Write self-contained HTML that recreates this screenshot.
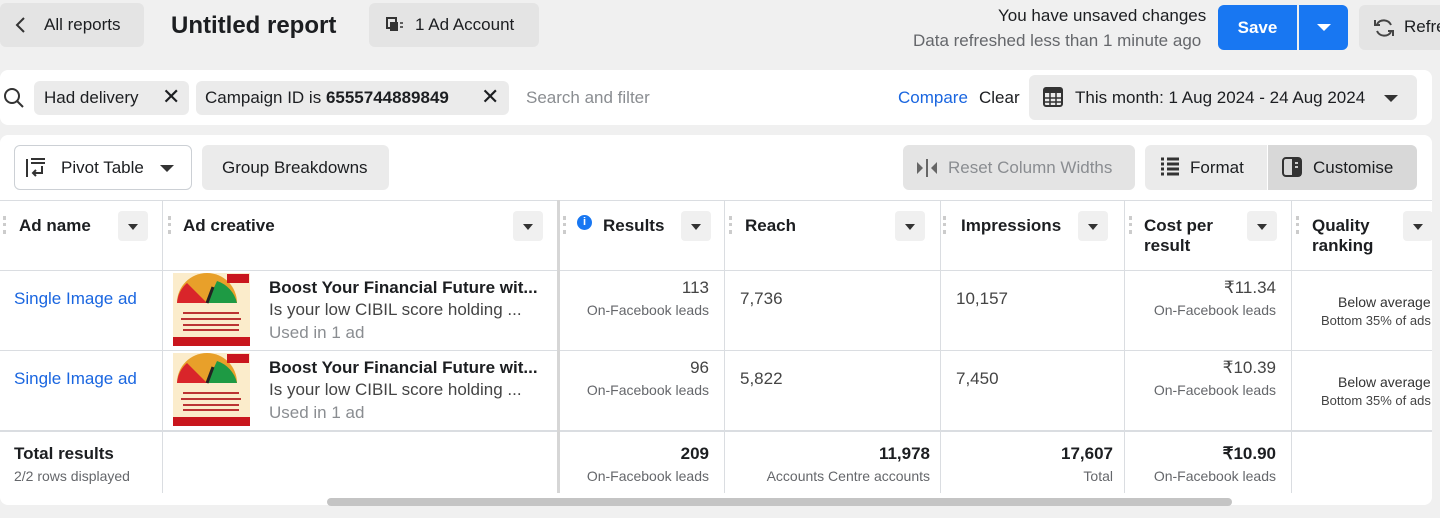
<!DOCTYPE html><html><head><style>
*{box-sizing:border-box;margin:0;padding:0}
body{width:1440px;height:518px;background:#f0f0f0;font-family:"Liberation Sans",sans-serif;color:#1c1e21;position:relative;overflow:hidden;font-size:17px}
.a{position:absolute;white-space:nowrap}
.btn{position:absolute;background:#e4e4e4;border-radius:6px}
.g{color:#65676b}
.dd{position:absolute;width:30px;height:30px;background:#f0f0f0;border-radius:4px}
.dd:after{content:"";position:absolute;left:10px;top:13px;border:5px solid transparent;border-top:6px solid #333;border-bottom:0}
.vl{position:absolute;width:1px;background:#dadde1}
.hl{position:absolute;height:1px;background:#dadde1}
.hd{font-weight:bold;font-size:17px}
.grip{position:absolute;width:3px;height:18px;border-left:3px dotted #ccc}
.r{text-align:right}
.sm{font-size:14px;color:#65676b}
.lnk{color:#1a66e0}
</style></head><body>
<div class="btn" style="left:0;top:3px;width:144px;height:44px"></div>
<svg class="a" style="left:14px;top:16px" width="14" height="18"><path d="M10 2 L3 9 L10 16" stroke="#333" stroke-width="2" fill="none"/></svg>
<div class="a" style="left:44px;top:15px">All reports</div>
<div class="a" style="left:171px;top:12px;font-size:24px;font-weight:bold">Untitled report</div>
<div class="btn" style="left:369px;top:3px;width:170px;height:44px"></div>
<svg class="a" style="left:386px;top:17px" width="18" height="16"><rect x="1" y="1" width="9" height="10" fill="none" stroke="#333" stroke-width="2"/><rect x="4" y="5" width="8" height="9" fill="#333"/><path d="M14 6h3M14 10h3" stroke="#333" stroke-width="1.5"/></svg>
<div class="a" style="left:415px;top:15px">1 Ad Account</div>
<div class="a" style="left:998px;top:6px">You have unsaved changes</div>
<div class="a g" style="left:913px;top:31px">Data refreshed less than 1 minute ago</div>
<div class="a" style="left:1218px;top:5px;width:79px;height:45px;background:#1877f2;border-radius:6px 0 0 6px;color:#fff;font-weight:bold;text-align:center;line-height:45px">Save</div>
<div class="a" style="left:1299px;top:5px;width:49px;height:45px;background:#1877f2;border-radius:0 6px 6px 0"></div>
<div class="a" style="left:1317px;top:24px;border:7px solid transparent;border-top:7px solid #fff;border-bottom:0"></div>
<div class="btn" style="left:1359px;top:5px;width:100px;height:45px"></div>
<svg class="a" style="left:1373px;top:17px" width="22" height="22"><path d="M18 8A8 8 0 0 0 4 7M4 14A8 8 0 0 0 18 15" stroke="#444" stroke-width="2" fill="none"/><path d="M2 3v5h5M20 19v-5h-5" stroke="#444" stroke-width="2" fill="none"/></svg>
<div class="a" style="left:1404px;top:17px">Refre</div>

<div class="a" style="left:0;top:70px;width:1432px;height:55px;background:#fff;border-radius:8px"></div>
<svg class="a" style="left:3px;top:87px" width="22" height="22"><circle cx="9" cy="9" r="7" stroke="#333" stroke-width="2" fill="none"/><path d="M14 14l6 6" stroke="#333" stroke-width="2"/></svg>
<div class="btn" style="left:34px;top:81px;width:155px;height:34px;background:#ebebeb"></div>
<div class="a" style="left:44px;top:88px">Had delivery</div>
<div class="a" style="left:162px;top:84px;font-size:22px">✕</div>
<div class="btn" style="left:196px;top:81px;width:313px;height:34px;background:#ebebeb"></div>
<div class="a" style="left:205px;top:88px">Campaign ID is <b>6555744889849</b></div>
<div class="a" style="left:481px;top:84px;font-size:22px">✕</div>
<div class="a" style="left:526px;top:88px;color:#8a8d91">Search and filter</div>
<div class="a lnk" style="left:898px;top:88px">Compare</div>
<div class="a" style="left:979px;top:88px">Clear</div>
<div class="btn" style="left:1029px;top:75px;width:388px;height:45px;background:#ebebeb"></div>
<svg class="a" style="left:1043px;top:87px" width="20" height="20"><rect x="1" y="1" width="18" height="18" rx="2" fill="none" stroke="#333" stroke-width="2"/><rect x="1" y="1" width="18" height="5" fill="#333"/><path d="M7 6v13M13 6v13M1 11h18M1 15h18" stroke="#333" stroke-width="1.5"/></svg>
<div class="a" style="left:1075px;top:88px">This month: 1 Aug 2024 - 24 Aug 2024</div>
<div class="a" style="left:1384px;top:95px;border:7px solid transparent;border-top:7px solid #333;border-bottom:0"></div>

<div class="a" style="left:0;top:135px;width:1432px;height:370px;background:#fff;border-radius:8px"></div>
<div class="a" style="left:14px;top:145px;width:178px;height:45px;border:1px solid #ccd0d5;border-radius:6px"></div>
<svg class="a" style="left:25px;top:157px" width="22" height="22"><path d="M2 2v18M6 2h14M6 6h14" stroke="#333" stroke-width="2"/><path d="M17 9v7h-8M11 13l-3 3 3 3" stroke="#333" stroke-width="2" fill="none"/></svg>
<div class="a" style="left:61px;top:158px">Pivot Table</div>
<div class="a" style="left:160px;top:165px;border:7px solid transparent;border-top:7px solid #333;border-bottom:0"></div>
<div class="btn" style="left:202px;top:145px;width:187px;height:45px;background:#ebebeb"></div>
<div class="a" style="left:222px;top:158px">Group Breakdowns</div>
<div class="btn" style="left:903px;top:145px;width:232px;height:45px;background:#e4e4e4"></div>
<svg class="a" style="left:915px;top:158px" width="24" height="20"><path d="M2 4l6 6-6 6zM22 4l-6 6 6 6z" fill="#666"/><path d="M12 1v18" stroke="#666" stroke-width="2"/></svg>
<div class="a" style="left:948px;top:158px;color:#8a8d91">Reset Column Widths</div>
<div class="btn" style="left:1145px;top:145px;width:122px;height:45px;background:#ebebeb;border-radius:6px 0 0 6px"></div>
<svg class="a" style="left:1160px;top:157px" width="20" height="20"><path d="M1 2h3M1 7h3M1 12h3M1 17h3M7 2h12M7 7h12M7 12h12M7 17h12" stroke="#333" stroke-width="3"/></svg>
<div class="a" style="left:1190px;top:158px">Format</div>
<div class="btn" style="left:1268px;top:145px;width:149px;height:45px;background:#d8d8d8;border-radius:0 6px 6px 0"></div>
<svg class="a" style="left:1282px;top:157px" width="20" height="20"><rect x="1" y="1" width="18" height="18" rx="3" fill="none" stroke="#333" stroke-width="2"/><rect x="10" y="1" width="9" height="18" fill="#333"/><path d="M13 6h3M13 10h3" stroke="#fff" stroke-width="1.5"/></svg>
<div class="a" style="left:1313px;top:158px">Customise</div>

<div class="hl" style="left:0;top:200px;width:1432px"></div>
<div class="hl" style="left:0;top:270px;width:1432px"></div>
<div class="hl" style="left:0;top:350px;width:1432px"></div>
<div class="hl" style="left:0;top:430px;width:1432px;height:2px"></div>
<div class="vl" style="left:162px;top:200px;height:293px"></div>
<div class="a" style="left:557px;top:200px;width:3px;height:293px;background:#d6d6d6"></div>
<div class="vl" style="left:724px;top:200px;height:293px"></div>
<div class="vl" style="left:940px;top:200px;height:293px"></div>
<div class="vl" style="left:1124px;top:200px;height:293px"></div>
<div class="vl" style="left:1291px;top:200px;height:293px"></div>

<div class="grip" style="left:3px;top:216px"></div><div class="a hd" style="left:19px;top:216px">Ad name</div><div class="dd" style="left:118px;top:211px"></div>
<div class="grip" style="left:168px;top:216px"></div><div class="a hd" style="left:183px;top:216px">Ad creative</div><div class="dd" style="left:513px;top:211px"></div>
<div class="grip" style="left:563px;top:216px"></div>
<div class="a" style="left:577px;top:215px;width:15px;height:15px;border-radius:50%;background:#1877f2;color:#fff;font-size:11px;font-weight:bold;text-align:center;line-height:15px">i</div>
<div class="a hd" style="left:603px;top:216px">Results</div><div class="dd" style="left:681px;top:211px"></div>
<div class="grip" style="left:729px;top:216px"></div><div class="a hd" style="left:745px;top:216px">Reach</div><div class="dd" style="left:895px;top:211px"></div>
<div class="grip" style="left:943px;top:216px"></div><div class="a hd" style="left:961px;top:216px">Impressions</div><div class="dd" style="left:1078px;top:211px"></div>
<div class="grip" style="left:1129px;top:216px"></div>
<div class="a hd" style="left:1144px;top:216px;line-height:20px">Cost per<br>result</div><div class="dd" style="left:1247px;top:211px"></div>
<div class="grip" style="left:1296px;top:216px"></div>
<div class="a hd" style="left:1312px;top:216px;line-height:20px">Quality<br>ranking</div><div class="dd" style="left:1403px;top:211px"></div>

<div class="a lnk" style="left:14px;top:289px">Single Image ad</div>
<div class="a lnk" style="left:14px;top:369px">Single Image ad</div>
<svg class="a" style="left:173px;top:273px" width="77" height="73"><rect width="77" height="73" fill="#fbeccb"/><path d="M4 30A30 30 0 0 1 64 30Z" fill="#e8a02a"/><path d="M4 30A30 30 0 0 1 14 10L34 30Z" fill="#d9252a"/><path d="M44 8A30 30 0 0 1 64 30L34 30Z" fill="#1e9a44"/><path d="M34 30L40 14" stroke="#222" stroke-width="3"/><rect x="54" y="1" width="22" height="9" fill="#c9161d"/><path d="M10 40h56M8 46h60M10 52h56M10 57h56" stroke="#b33" stroke-width="2"/><rect y="64" width="77" height="9" fill="#c9161d"/></svg>
<svg class="a" style="left:173px;top:353px" width="77" height="73"><rect width="77" height="73" fill="#fbeccb"/><path d="M4 30A30 30 0 0 1 64 30Z" fill="#e8a02a"/><path d="M4 30A30 30 0 0 1 14 10L34 30Z" fill="#d9252a"/><path d="M44 8A30 30 0 0 1 64 30L34 30Z" fill="#1e9a44"/><path d="M34 30L40 14" stroke="#222" stroke-width="3"/><rect x="54" y="1" width="22" height="9" fill="#c9161d"/><path d="M10 40h56M8 46h60M10 52h56M10 57h56" stroke="#b33" stroke-width="2"/><rect y="64" width="77" height="9" fill="#c9161d"/></svg>
<div class="a" style="left:269px;top:278px;font-weight:bold">Boost Your Financial Future wit...</div>
<div class="a" style="left:269px;top:300px;color:#444">Is your low CIBIL score holding ...</div>
<div class="a" style="left:269px;top:323px;color:#8a8d91">Used in 1 ad</div>
<div class="a" style="left:269px;top:358px;font-weight:bold">Boost Your Financial Future wit...</div>
<div class="a" style="left:269px;top:380px;color:#444">Is your low CIBIL score holding ...</div>
<div class="a" style="left:269px;top:403px;color:#8a8d91">Used in 1 ad</div>

<div class="a r" style="right:731px;top:278px;color:#444;font-size:17px">113</div>
<div class="a r sm" style="right:731px;top:302px">On-Facebook leads</div>
<div class="a r" style="right:731px;top:358px;color:#444;font-size:17px">96</div>
<div class="a r sm" style="right:731px;top:382px">On-Facebook leads</div>
<div class="a" style="left:740px;top:289px;color:#444;font-size:17px">7,736</div>
<div class="a" style="left:740px;top:369px;color:#444;font-size:17px">5,822</div>
<div class="a" style="left:956px;top:289px;color:#444;font-size:17px">10,157</div>
<div class="a" style="left:956px;top:369px;color:#444;font-size:17px">7,450</div>
<div class="a r" style="right:164px;top:278px;color:#444;font-size:17px">₹11.34</div>
<div class="a r sm" style="right:164px;top:302px">On-Facebook leads</div>
<div class="a r" style="right:164px;top:358px;color:#444;font-size:17px">₹10.39</div>
<div class="a r sm" style="right:164px;top:382px">On-Facebook leads</div>
<div class="a" style="left:1292px;top:270px;width:140px;height:160px;overflow:hidden">
<div class="a" style="left:46px;top:24px;font-size:14px;color:#333">Below average</div>
<div class="a" style="left:29px;top:43px;font-size:13px;color:#444">Bottom 35% of ads</div>
<div class="a" style="left:46px;top:104px;font-size:14px;color:#333">Below average</div>
<div class="a" style="left:29px;top:123px;font-size:13px;color:#444">Bottom 35% of ads</div>
</div>

<div class="a" style="left:14px;top:444px;font-weight:bold;font-size:17px">Total results</div>
<div class="a sm" style="left:14px;top:468px">2/2 rows displayed</div>
<div class="a r" style="right:731px;top:444px;font-weight:bold;font-size:17px">209</div>
<div class="a r sm" style="right:731px;top:468px">On-Facebook leads</div>
<div class="a r" style="right:510px;top:444px;font-weight:bold;font-size:17px">11,978</div>
<div class="a r sm" style="right:510px;top:468px">Accounts Centre accounts</div>
<div class="a r" style="right:327px;top:444px;font-weight:bold;font-size:17px">17,607</div>
<div class="a r sm" style="right:327px;top:468px">Total</div>
<div class="a r" style="right:164px;top:444px;font-weight:bold;font-size:17px">₹10.90</div>
<div class="a r sm" style="right:164px;top:468px">On-Facebook leads</div>

<div class="a" style="left:327px;top:498px;width:905px;height:8px;background:#c4c4c4;border-radius:4px"></div>
</body></html>
